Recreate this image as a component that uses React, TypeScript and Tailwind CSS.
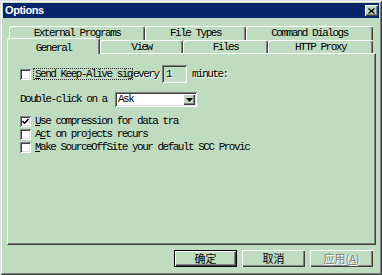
import React from "react";

// monospaced label text, the old bitmap look of the dialog
const mono = "font-['Liberation_Mono','Courier_New',monospace] text-[11px] tracking-[-1.5px] leading-none text-black whitespace-nowrap";
const dim = "text-[#808080] [text-shadow:1px_1px_0_#ffffff]";
const raised = "shadow-[inset_1px_1px_#ffffff,inset_-1px_-1px_#404040,inset_-2px_-2px_#808080]";
const sunken = "shadow-[inset_1px_1px_#808080,inset_-1px_-1px_#ffffff,inset_2px_2px_#404040,inset_-2px_-2px_#dfdfdf]";

const Check = ({ checked = false }: { checked?: boolean }) => (
  <span className={`w-[11px] h-[11px] shrink-0 bg-white flex items-center justify-center ${sunken}`}>
    {checked && (
      <svg width="7" height="7" viewBox="0 0 7 7">
        <polyline points="0.5,3 2.5,5.2 6.5,1" fill="none" stroke="#000" strokeWidth="1.6" />
      </svg>
    )}
  </span>
);

const Tab = ({ label, className }: { label: string; className: string }) => (
  <div
    className={`flex items-center justify-center bg-[#c0dcc0] border-l border-t border-white border-r border-r-[#404040] rounded-t-[3px] shadow-[inset_-1px_0_#808080] ${className}`}
  >
    <span className={mono}>{label}</span>
  </div>
);

const Button = ({ children, main, off }: { children: React.ReactNode; main?: boolean; off?: boolean }) => (
  <div
    className={`w-[63px] h-[17px] flex items-center justify-center bg-[#c0dcc0] font-['Noto_Sans_CJK_SC',sans-serif] text-[11px] leading-none ${raised} ${
      main ? "border border-black" : ""
    } ${off ? dim : "text-black"}`}
  >
    {children}
  </div>
);

export default function App() {
  return (
    <div className="w-[382px] h-[275px] bg-[#c0dcc0] flex flex-col overflow-hidden shadow-[inset_1px_1px_#dfdfdf,inset_-1px_-1px_#404040,inset_2px_2px_#ffffff,inset_-2px_-2px_#808080]">
      {/* title bar */}
      <div className="mt-[3px] mx-[3px] h-[15px] bg-[#0a246a] flex items-center justify-between pl-[2px] pr-[1px]">
        <span className="text-white font-bold text-[11px] tracking-[-0.4px] leading-none font-['Liberation_Sans',Arial,sans-serif]">
          Options
        </span>
        <span className={`w-[13px] h-[11px] bg-[#c0dcc0] flex items-center justify-center ${raised}`}>
          <svg width="7" height="6" viewBox="0 0 7 6">
            <path d="M0.5 0.5 L6.5 5.5 M6.5 0.5 L0.5 5.5" stroke="#000" strokeWidth="1.4" />
          </svg>
        </span>
      </div>

      {/* tabs + page */}
      <div className="mt-[8px] ml-[7px] w-[369px] flex flex-col">
        <div className="flex h-[14px] pl-[2px]">
          <Tab label="External Programs" className="w-[136px] h-[14px]" />
          <Tab label="File Types" className="w-[101px] h-[14px]" />
          <Tab label="Command Dialogs" className="w-[127px] h-[14px]" />
        </div>
        <div className="relative z-10 flex items-end h-[16px] -mt-[2px]">
          <div className="w-[93px] h-[16px] flex justify-center pt-[4px] bg-[#c0dcc0] border-l border-t border-white border-r border-r-[#404040] rounded-t-[3px] shadow-[inset_-1px_0_#808080]">
            <span className={mono}>General</span>
          </div>
          <Tab label="View" className="w-[83px] h-[13px] mb-[1px]" />
          <Tab label="Files" className="w-[85px] h-[13px] mb-[1px]" />
          <Tab label="HTTP Proxy" className="w-[105px] h-[13px] mb-[1px]" />
        </div>

        <div className="-mt-[1px] h-[192px] border border-white border-r-[#404040] border-b-[#404040] shadow-[inset_-1px_-1px_#808080] flex flex-col pl-[12px] pt-[11px]">
          <div className="flex items-center h-[18px]">
            <Check />
            <span className="ml-[2px] w-[100px] h-[12px] pl-[1px] border border-dotted border-[#303030] flex items-center">
              <span className={mono}>
                <span className="underline">S</span>end Keep-Alive sig
              </span>
            </span>
            <span className={`w-[29px] ${mono} ${dim}`}>every</span>
            <span className={`w-[25px] h-[18px] flex items-center pl-[4px] ${sunken}`}>
              <span className={`${mono} ${dim}`}>1</span>
            </span>
            <span className={`ml-[5px] ${mono} ${dim}`}>minute:</span>
          </div>

          <div className="mt-[9px] flex items-center h-[15px]">
            <span className={`w-[95px] ${mono}`}>Double-click on a</span>
            <div className={`w-[82px] h-[15px] bg-white flex items-center justify-between pl-[3px] pr-[2px] ${sunken}`}>
              <span className={mono}>Ask</span>
              <span className={`w-[12px] h-[11px] bg-[#c0dcc0] flex items-center justify-center ${raised}`}>
                <svg width="7" height="4" viewBox="0 0 7 4">
                  <path d="M0 0 H7 L3.5 4 Z" fill="#000" />
                </svg>
              </span>
            </div>
          </div>

          <div className="mt-[8px] flex flex-col">
            <div className="flex items-center h-[13px]">
              <Check checked />
              <span className={`ml-[4px] ${mono}`}>
                <span className="underline">U</span>se compression for data tra
              </span>
            </div>
            <div className="flex items-center h-[13px]">
              <Check />
              <span className={`ml-[4px] ${mono}`}>
                A<span className="underline">c</span>t on projects recurs
              </span>
            </div>
            <div className="flex items-center h-[13px]">
              <Check />
              <span className={`ml-[4px] ${mono}`}>
                <span className="underline">M</span>ake SourceOffSite your default SCC Provic
              </span>
            </div>
          </div>
        </div>
      </div>

      {/* dialog buttons */}
      <div className="mt-[5px] flex justify-end gap-[5px] pr-[9px]">
        <Button main>确定</Button>
        <Button>取消</Button>
        <Button off>
          应用(<span className="underline">A</span>)
        </Button>
      </div>
    </div>
  );
}
